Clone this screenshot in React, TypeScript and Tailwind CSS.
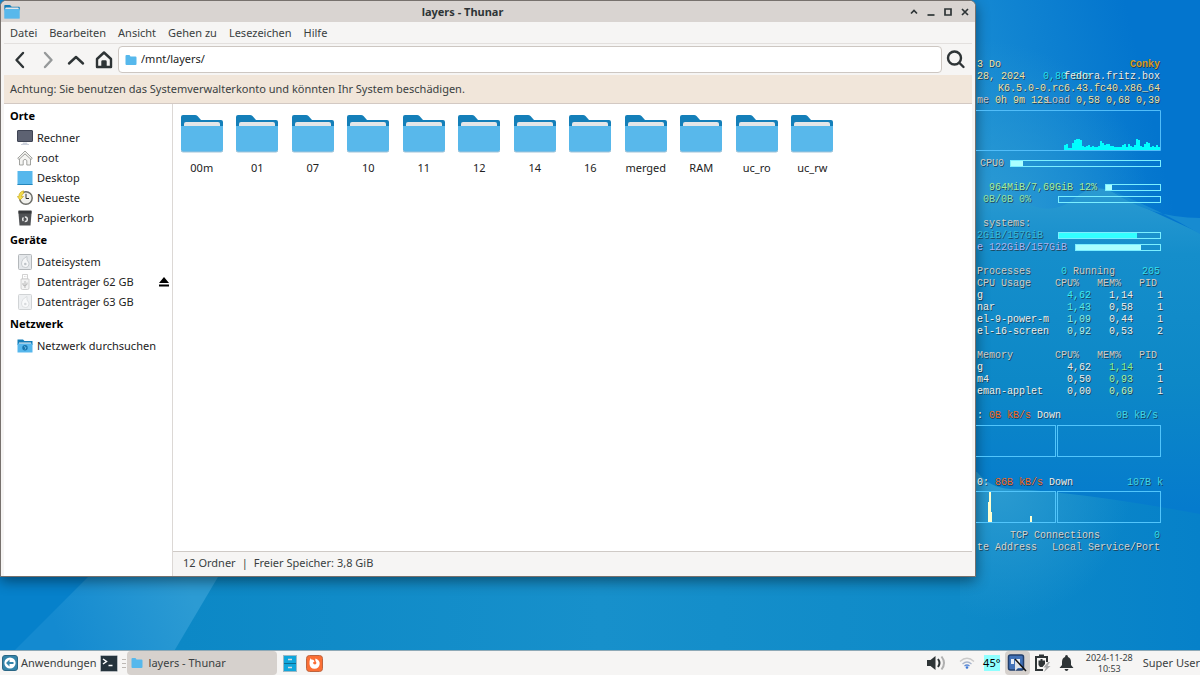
import type { ReactNode } from "react";

const folders = ["00m", "01", "07", "10", "11", "12", "14", "16", "merged", "RAM", "uc_ro", "uc_rw"];
const menus = ["Datei", "Bearbeiten", "Ansicht", "Gehen zu", "Lesezeichen", "Hilfe"];

const cpuLoad = [
  5, 6, 2, 2, 7, 10, 11, 11, 10, 4, 3, 4, 5, 3, 4, 3, 3, 4, 9, 7, 5, 6, 6, 4,
  4, 3, 3, 3, 3, 5, 6, 3, 6, 4, 3, 5, 11, 10, 4, 3, 6, 8, 7, 3, 4, 3, 5, 3,
];

function Wallpaper() {
  return (
    <svg className="absolute inset-0 -z-10 h-full w-full" viewBox="0 0 1200 675" preserveAspectRatio="none">
      <defs>
        <linearGradient id="sky" x1="960" x2="1130" y1="60" y2="20" gradientUnits="userSpaceOnUse">
          <stop offset="0" stopColor="#188cd3" />
          <stop offset="1" stopColor="#0375ce" />
        </linearGradient>
        <radialGradient id="haze" cx="980" cy="210" r="170" gradientUnits="userSpaceOnUse">
          <stop offset="0" stopColor="#2b9ad3" />
          <stop offset="1" stopColor="#2b9ad3" stopOpacity="0" />
        </radialGradient>
        <linearGradient id="sea" x1="0" x2="0" y1="190" y2="510" gradientUnits="userSpaceOnUse">
          <stop offset="0" stopColor="#2a9ad2" />
          <stop offset="0.2" stopColor="#158ecb" />
          <stop offset="0.6" stopColor="#0d88c7" />
          <stop offset="1" stopColor="#057bcd" />
        </linearGradient>
        <linearGradient id="floor" x1="0" x2="1200" y1="0" y2="0" gradientUnits="userSpaceOnUse">
          <stop offset="0.15" stopColor="#0c88c6" />
          <stop offset="0.5" stopColor="#1790cb" />
          <stop offset="0.8" stopColor="#0e8ac8" />
          <stop offset="1" stopColor="#0681c9" />
        </linearGradient>
        <radialGradient id="glow" cx="1000" cy="490" r="130" gradientUnits="userSpaceOnUse">
          <stop offset="0" stopColor="#2a9ad0" />
          <stop offset="1" stopColor="#2a9ad0" stopOpacity="0" />
        </radialGradient>
        <linearGradient id="beam" x1="60" x2="190" y1="640" y2="590" gradientUnits="userSpaceOnUse">
          <stop offset="0" stopColor="#148ad0" />
          <stop offset="1" stopColor="#2c9bd3" />
        </linearGradient>
      </defs>
      <rect width="1200" height="675" fill="url(#sky)" />
      <circle cx="980" cy="210" r="170" fill="url(#haze)" />
      <path d="M960 205Q1000 190 1030 205Q1055 215 1075 198Q1095 180 1118 195Q1160 215 1200 233V520H960Z" fill="url(#sea)" />
      <path d="M1110 190Q1150 218 1200 218V234Q1160 210 1110 190Z" fill="#178bd1" />
      <path d="M0 560H960V470L977 472Q990 488 1010 489Q1080 492 1200 514V675H0Z" fill="url(#floor)" />
      <path d="M960 470L977 472Q990 488 1010 489Q1080 492 1200 514V675H960Z" fill="url(#glow)" />
      <path d="M0 560H110L0 670Z" fill="#0681cb" />
      <path d="M105 560H228L160 675H-10Z" fill="url(#beam)" />
    </svg>
  );
}

function Folder({ className }: { className: string }) {
  return (
    <svg className={className} viewBox="0 0 42 38">
      <path d="M0 2Q0 0 2 0H14Q15.500 0 16.500 1L20 5H40Q42 5 42 7V14H0Z" fill="#147fb9" />
      <path d="M3 9Q3 7 5 7H37Q39 7 39 9V16H3Z" fill="#e4e6e8" />
      <path d="M0 11H42V35Q42 37 40 37H2Q0 37 0 35Z" fill="#58b8eb" />
      <path d="M0 35Q0 37 2 37H40Q42 37 42 35" fill="none" stroke="#a3c4d8" />
    </svg>
  );
}

function SmallFolder({ className }: { className: string }) {
  return (
    <svg className={className} viewBox="0 0 11 10">
      <path d="M0 1Q0 0 1 0H4L5 1.500H10Q11 1.500 11 2.500V9Q11 10 10 10H1Q0 10 0 9Z" fill="#56b8ec" />
    </svg>
  );
}

function Computer() {
  return (
    <svg className="size-4" viewBox="0 0 16 16">
      <rect x="0.500" y="0.500" width="15" height="11" rx="0.500" fill="#5d6272" stroke="#3f4454" />
      <path d="M6 12.500H10L10.500 14H12V15H4V14H5.500Z" fill="#ccd1dc" />
    </svg>
  );
}

function RootHome() {
  return (
    <svg className="size-4" viewBox="0 0 16 16" fill="#f4f4f2" stroke="#8b8d89" strokeWidth="0.8">
      <path d="M2.500 8V15H6.200V10.500Q8 8 9.800 10.500V15H13.500V8L8 3.500Z" />
      <path d="M0.700 8.300L8 1L15.300 8.300L14 9.500L8 3.800L2 9.500Z" />
    </svg>
  );
}

function DesktopTile() {
  return (
    <svg className="size-4" viewBox="0 0 16 16">
      <rect x="0.500" y="1" width="15" height="14" fill="#56b7ec" />
      <path d="M0.500 14.500H15.500" stroke="#2586bb" />
    </svg>
  );
}

function Clock() {
  return (
    <svg className="size-4" viewBox="0 0 16 16">
      <circle cx="8.900" cy="8" r="6.300" fill="#f1f1ed" stroke="#6d6e69" strokeWidth="1.500" />
      <path d="M9 3.800V8.500H12" fill="none" stroke="#333" />
      <path d="M0.300 6.500L3 10L6.500 6.500H4.500Q4.500 4.500 6.500 3.500V0.800Q2 2 1.800 6.500Z" fill="#f3dc49" stroke="#c5a214" strokeWidth="0.600" />
    </svg>
  );
}

function Trash() {
  return (
    <svg className="size-4" viewBox="0 0 16 16">
      <path d="M1.500 1H14.500V3.500L13.500 15.500H2.500L1.500 3.500Z" fill="#505255" />
      <path d="M1.500 0.500H14.500V3.500H1.500Z" fill="#36383b" />
      <circle cx="8" cy="9.300" r="2.300" fill="none" stroke="#e6e6e6" strokeWidth="1.500" strokeDasharray="3.500 1.300" />
    </svg>
  );
}

function Disk({ className }: { className?: string }) {
  return (
    <svg className={`size-4 ${className ?? ""}`} viewBox="0 0 16 16">
      <rect x="1.500" y="0.500" width="13" height="15" rx="1" fill="#e4e7ea" stroke="#b4b8bb" />
      <path d="M4.500 10Q4.500 5 10 2.500Q9 6 12 9Q12 13.500 8.500 13.500Q4.500 13.500 4.500 10Z" fill="#f5f6f7" stroke="#b6bbc0" strokeWidth="0.700" />
      <circle cx="8.300" cy="10" r="1.300" fill="#bec3c8" />
    </svg>
  );
}

function Usb() {
  return (
    <svg className="size-4" viewBox="0 0 16 16" stroke="#c6c6c6" strokeWidth="0.800">
      <path d="M5.500 0.500H10.500V5H5.500Z" fill="#fff" />
      <path d="M4 5H12V14Q12 15.500 10.500 15.500H5.500Q4 15.500 4 14Z" fill="#f3f3f3" />
      <path d="M8 7V14M6 9V11L8 12M10 8.500V10.500L8 11.500M7 2.500H7.500M8.700 2.500H9.200" fill="none" stroke="#aaa" />
    </svg>
  );
}

function NetworkFolder() {
  return (
    <svg className="size-4" viewBox="0 0 16 16">
      <path d="M0.500 1.500H6L7.500 3H15.500V7H0.500Z" fill="#147fb9" />
      <path d="M2 4.500H14V6H2Z" fill="#e4e6e8" />
      <path d="M0.500 5.500H15.500V14.500H0.500Z" fill="#56b7ec" />
      <circle cx="8" cy="9.700" r="2.700" fill="#1574ac" />
      <path d="M7 8.500L9 9.500L8 11.500" fill="none" stroke="#78c6ee" strokeWidth="0.800" />
    </svg>
  );
}

function Place({ icon, label, children }: { icon: ReactNode; label: string; children?: ReactNode }) {
  return (
    <li className="flex h-5 items-center pr-[3px] pl-[13px]">
      <a href="#" className="flex flex-1 items-center gap-1 whitespace-nowrap text-[#222]">
        {icon}
        {label}
      </a>
      {children}
    </li>
  );
}

function PlaceGroup({ title, children }: { title: string; children: ReactNode }) {
  return (
    <section>
      <h2 className="flex h-6 items-center pl-1.5 font-bold text-black">{title}</h2>
      <ul>{children}</ul>
    </section>
  );
}

function WindowButton({ label, d }: { label: string; d: string }) {
  return (
    <button aria-label={label} className="flex size-[17px] items-center justify-center">
      <svg className="size-2.5" viewBox="0 0 10 10" fill="none" stroke="#2e3436" strokeWidth="1.700">
        <path d={d} />
      </svg>
    </button>
  );
}

function ToolButton({ label, children }: { label: string; children: ReactNode }) {
  return (
    <button aria-label={label} className="flex h-7 w-7 shrink-0 items-center justify-center">
      <svg className="size-5" viewBox="0 0 20 20" fill="none" stroke="#2e3436" strokeWidth="2.400" strokeLinecap="round" strokeLinejoin="round">
        {children}
      </svg>
    </button>
  );
}

function FileManager() {
  return (
    <main className="mb-[73px] flex min-w-0 flex-1 flex-col rounded-t-md border border-[#77716d] bg-[#f6f5f4] text-[11px] text-[#3a3f41] shadow-[0_4px_14px_rgba(0,0,0,0.45)]">
      <header className="flex h-[21px] shrink-0 items-center rounded-t-md bg-[#d9d4d1] pr-0.5 pl-[3px]">
        <Folder className="h-[14px] w-4" />
        <h1 className="flex-1 pt-0.5 text-center font-bold text-[#2e3436]">layers - Thunar</h1>
        <WindowButton label="Einrollen" d="M2 6.500L5 3.500L8 6.500" />
        <WindowButton label="Minimieren" d="M1.500 8H8.500" />
        <WindowButton label="Maximieren" d="M2 2H8V8H2Z" />
        <WindowButton label="Schließen" d="M2 2L8 8M8 2L2 8" />
      </header>
      <div className="flex flex-1 flex-col px-[3px]">
        <nav className="flex h-[22px] items-center gap-3 border-b border-[#e3e0de] pt-0.5 pl-1.5">
          {menus.map((menu) => (
            <button key={menu}>{menu}</button>
          ))}
        </nav>
        <div className="flex h-[31px] items-center px-0.5">
          <ToolButton label="Zurück">
            <path d="M13 3L6.500 10L13 17" />
          </ToolButton>
          <ToolButton label="Vor">
            <path d="M7 3L13.500 10L7 17" stroke="#96999a" />
          </ToolButton>
          <ToolButton label="Übergeordneter Ordner">
            <path d="M3 13.500L10 7L17 13.500" />
          </ToolButton>
          <ToolButton label="Persönlicher Ordner">
            <path d="M3 9L10 2.500L17 9V17H3Z" />
            <path d="M8.500 16V11.500H11.500V16Z" fill="#2e3436" />
          </ToolButton>
          <label className="flex h-[27px] flex-1 items-center gap-1 rounded-[4px] border border-[#cdc7c2] bg-white pl-1.5">
            <SmallFolder className="h-[10px] w-3" />
            <input aria-label="Pfad" defaultValue="/mnt/layers/" className="min-w-0 flex-1 bg-transparent text-[#222] outline-none" />
          </label>
          <ToolButton label="Suchen">
            <circle cx="8.500" cy="8" r="6.500" />
            <path d="M13.500 13L17.500 17" />
          </ToolButton>
        </div>
        <p className="flex h-[29px] items-center border-b border-[#d3c9c3] bg-[#f1e6da] pl-1.5">
          Achtung: Sie benutzen das Systemverwalterkonto und könnten Ihr System beschädigen.
        </p>
        <div className="flex flex-1">
          <aside className="w-[169px] shrink-0 border-r border-[#dcd8d5] bg-white">
            <PlaceGroup title="Orte">
              <Place icon={<Computer />} label="Rechner" />
              <Place icon={<RootHome />} label="root" />
              <Place icon={<DesktopTile />} label="Desktop" />
              <Place icon={<Clock />} label="Neueste" />
              <Place icon={<Trash />} label="Papierkorb" />
            </PlaceGroup>
            <PlaceGroup title="Geräte">
              <Place icon={<Disk />} label="Dateisystem" />
              <Place icon={<Usb />} label="Datenträger 62 GB">
                <button aria-label="Auswerfen">
                  <svg className="size-2.5" viewBox="0 0 10 10">
                    <path d="M5 0L10 6H0ZM0 7.500H10V9.500H0Z" />
                  </svg>
                </button>
              </Place>
              <Place icon={<Disk className="opacity-60" />} label="Datenträger 63 GB" />
            </PlaceGroup>
            <PlaceGroup title="Netzwerk">
              <Place icon={<NetworkFolder />} label="Netzwerk durchsuchen" />
            </PlaceGroup>
          </aside>
          <div className="flex min-w-0 flex-1 flex-col">
            <div className="flex-1 bg-white pt-[11px] pl-px">
              <ul className="grid w-[666px] grid-cols-12">
                {folders.map((name) => (
                  <li key={name} className="flex flex-col items-center gap-[7px] text-[#222]">
                    <Folder className="h-[38px] w-[42px]" />
                    <span className="leading-4">{name}</span>
                  </li>
                ))}
              </ul>
            </div>
            <footer className="flex h-[25px] items-center gap-1.5 border-t border-[#cfcac6] pb-0.5 pl-2.5">
              <span>12 Ordner</span>
              <span>|</span>
              <span>Freier Speicher: 3,8 GiB</span>
            </footer>
          </div>
        </div>
      </div>
    </main>
  );
}

function Row({ children, right }: { children?: ReactNode; right?: ReactNode }) {
  return (
    <div className="grid h-3 pr-px pl-px whitespace-pre">
      <span className="col-start-1 row-start-1">{children}</span>
      <span className="col-start-1 row-start-1 justify-self-end">{right}</span>
    </div>
  );
}

type BarRowProps = { label: ReactNode; width: string; value: number; fill?: string };

function BarRow({ label, width, value, fill = "bg-[#aaffff]" }: BarRowProps) {
  return (
    <div className="flex h-3 items-start justify-between pl-px whitespace-pre">
      {label}
      <div className={`mt-0.5 h-[7px] shrink-0 border border-[#7beeff] ${width}`} role="meter" aria-valuenow={value}>
        <div className={`h-full ${fill}`} style={{ width: `${value}%` }} />
      </div>
    </div>
  );
}

type Process = { name: string; cpu: string; mem: string; pid: string; cpuColor?: string; memColor?: string };

const byCpu: Process[] = [
  { name: "g", cpu: "4,62", mem: "1,14", pid: "1", cpuColor: "text-[#3fe9ee]" },
  { name: "nar", cpu: "1,43", mem: "0,58", pid: "1", cpuColor: "text-[#5ce8e4]" },
  { name: "el-9-power-m", cpu: "1,09", mem: "0,44", pid: "1", cpuColor: "text-[#8ceee4]" },
  { name: "el-16-screen", cpu: "0,92", mem: "0,53", pid: "2", cpuColor: "text-[#b5efe9]" },
];

const byMemory: Process[] = [
  { name: "g", cpu: "4,62", mem: "1,14", pid: "1", memColor: "text-[#8df08a]" },
  { name: "m4", cpu: "0,50", mem: "0,93", pid: "1", memColor: "text-[#a6eea0]" },
  { name: "eman-applet", cpu: "0,00", mem: "0,69", pid: "1", memColor: "text-[#c2efb5]" },
];

function ProcessTable({ title, rows }: { title: string; rows: Process[] }) {
  return (
    <table className="ml-px w-[186px] table-fixed text-right whitespace-pre">
      <thead>
        <tr className="h-3 text-[#cfcac4]">
          <th className="w-[72px] p-0 text-left font-normal">{title}</th>
          <th className="w-[42px] p-0 pr-3 font-normal">CPU%</th>
          <th className="w-[42px] p-0 pr-3 font-normal">MEM%</th>
          <th className="w-[30px] p-0 pr-1.5 font-normal">PID</th>
        </tr>
      </thead>
      <tbody>
        {rows.map((row) => (
          <tr key={row.name} className="h-3">
            <td className="p-0 text-left">{row.name}</td>
            <td className={`p-0 ${row.cpuColor ?? ""}`}>{row.cpu}</td>
            <td className={`p-0 ${row.memColor ?? ""}`}>{row.mem}</td>
            <td className="p-0">{row.pid}</td>
          </tr>
        ))}
      </tbody>
    </table>
  );
}

function Conky() {
  return (
    <aside className="w-[224px] shrink-0 pt-[59px] pr-[39px] font-['Liberation_Mono',monospace] text-[10px] leading-3 text-[#eeece8] [text-shadow:1px_1px_0_rgba(30,40,50,0.7)]">
      <Row right={<span className="font-bold text-[#d99a1c]">Conky</span>}>
        <span className="text-[#f0dfa0]">3 Do</span>
      </Row>
      <Row right="fedora.fritz.box">
        <span className="text-[#f0dfa0]">{"28, 2024   "}</span>
        <span className="text-[#25dfee]">0,80 GHz</span>
      </Row>
      <div className="text-[#f0dfa0]">
        <Row right="K6.5.0-0.rc6.43.fc40.x86_64" />
        <Row
          right={
            <>
              <span className="text-[#c9c2c6]">Load</span> 0,58 0,68 0,39
            </>
          }
        >
          <span className="text-[#c9c2c6]">me</span> 0h 9m 12s
        </Row>
      </div>
      <svg className="mt-[3px] mb-[7px] h-[41px] w-full" viewBox="0 0 185 41" preserveAspectRatio="none">
        <path d="M0 0.500H184.500V40.500H0" fill="none" stroke="#52bdf8" />
        {cpuLoad.map((load, i) => (
          <rect key={i} x={88 + i * 2} y={40 - load} width="2" height={load} fill="#00ffff" />
        ))}
      </svg>
      <BarRow label={<span className="pl-[3px] text-[#cfcac4]">CPU0</span>} width="w-[151px]" value={8} />
      <div className="my-3">
        <BarRow label={<span className="text-[#a5eb9a]">{"  964MiB/7,69GiB 12%"}</span>} width="w-[56px]" value={11} />
        <BarRow label={<span className="text-[#93e0a4]">{" 0B/0B 0%"}</span>} width="w-[103px]" value={0} />
      </div>
      <Row>
        <span className="text-[#cfcac4]">{" systems:"}</span>
      </Row>
      <BarRow label={<span className="text-[#37b7d8]">2GiB/157GiB</span>} width="w-[103px]" fill="bg-[#33ffff]" value={77} />
      <BarRow label={<span className="text-[#a9b2f0]">e 122GiB/157GiB</span>} width="w-[86px]" value={77} />
      <div className="mt-3 text-[#cfcac4]">
        <Row right={<span className="text-[#35dcea]">205</span>}>
          {"Processes     "}
          <span className="text-[#35dcea]">0</span> Running
        </Row>
      </div>
      <ProcessTable title="CPU Usage" rows={byCpu} />
      <div className="my-3">
        <ProcessTable title="Memory" rows={byMemory} />
      </div>
      <Row right={<span className="pr-0.5 text-[#43d5e3]">0B kB/s</span>}>
        {": "}
        <span className="text-[#f0661c]">0B kB/s</span> Down
      </Row>
      <div className="mt-[3px] flex h-8 gap-px">
        <div className="flex-1 border border-l-0 border-[#52c5fb]" />
        <div className="w-[104px] border border-[#52c5fb]" />
      </div>
      <div className="mt-5">
        <Row>
          {"0: "}
          <span className="text-[#f0661c]">86B kB/s</span> Down{"         "}
          <span className="text-[#43d5e3]">107B k</span>
        </Row>
      </div>
      <div className="mt-0.5 mb-[7px] flex h-8 gap-px">
        <div className="flex-1 border border-l-0 border-[#52c5fb]">
          <svg className="h-full w-full" viewBox="0 0 79 30" preserveAspectRatio="none" fill="#ffffd0">
            <path d="M12 30V10H13V0H15V20H16V30ZM54 30V24H56V30Z" />
          </svg>
        </div>
        <div className="w-[104px] border border-[#52c5fb]" />
      </div>
      <div className="text-[#d6d2ce]">
        <Row right={<span className="text-[#35dcea]">0</span>}>
          <span className="pl-[33px]">TCP Connections</span>
        </Row>
        <Row right="Local Service/Port">te Address</Row>
      </div>
    </aside>
  );
}

function Taskbar() {
  return (
    <footer className="flex h-[25px] shrink-0 items-center border-t border-[#8fa9b6] bg-[#f6f5f4] text-[11px] whitespace-nowrap text-[#3a3f41]">
      <button className="flex items-center gap-[3px] pl-0.5">
        <svg className="size-4" viewBox="0 0 16 16">
          <rect x="0.500" y="0.500" width="15" height="15" rx="2.500" fill="#3484aa" stroke="#2a6685" />
          <circle cx="8" cy="8" r="5.600" fill="#fff" />
          <path d="M4 8L7.500 4.500V7H11.500V9H7.500V11.500Z" fill="#3484aa" />
        </svg>
        Anwendungen
      </button>
      <button aria-label="Terminal" className="ml-[3px]">
        <svg className="h-[17px] w-[18px]" viewBox="0 0 18 17">
          <rect x="0.500" y="0.500" width="17" height="16" rx="1" fill="#25333c" stroke="#b6bbbf" />
          <path d="M3 4L6.500 6.500L3 9M8.500 10.500H12.500" fill="none" stroke="#fff" strokeWidth="1.500" />
        </svg>
      </button>
      <svg className="mr-px ml-1 h-[9px] w-1 shrink-0" viewBox="0 0 4 9" stroke="#bcb8b4">
        <path d="M0 0.500H4M0 4.500H4M0 8.500H4" />
      </svg>
      <button className="flex h-6 w-[150px] items-center gap-1.5 rounded bg-[#d6d1cd] pl-1">
        <SmallFolder className="h-[10px] w-3" />
        layers - Thunar
      </button>
      <button aria-label="Dateiverwaltung" className="ml-1.5">
        <svg className="h-[17px] w-[14px]" viewBox="0 0 14 17">
          <rect x="0.500" y="0.500" width="13" height="16" fill="#0fa6dc" stroke="#9db9c5" />
          <path d="M1 8.500H13" stroke="#0a6c92" />
          <path d="M5 4.500H9M5 12.500H9" stroke="#d8dde0" strokeWidth="1.500" />
        </svg>
      </button>
      <button aria-label="Browser" className="ml-[9px]">
        <svg className="size-[17px]" viewBox="0 0 17 17">
          <rect x="0.500" y="0.500" width="16" height="16" rx="3" fill="#fb6f35" stroke="#bd6540" />
          <path d="M4.500 3Q5 5 6 4.500Q8 4.500 8.500 6.500L7 7.500Q7 9.500 9 9.500Q11.500 8.500 9.500 6Q9 4.500 9.500 3.500Q14 5 13.700 9Q13 13.500 8.500 13.800Q4 13.500 3.500 9Q3.200 6 4.500 3Z" fill="#fff" />
        </svg>
      </button>
      <div className="flex-1" />
      <button aria-label="Lautstärke">
        <svg className="h-4 w-[19px]" viewBox="0 0 19 16" fill="none" strokeWidth="2">
          <path d="M0 5H3.500L8.500 1V15L3.500 11H0Z" fill="#2e3436" />
          <path d="M11 4Q14 8 11 12" stroke="#2e3436" />
          <path d="M14.500 1.500Q19.500 8 14.500 14.500" stroke="#b0b0b0" />
        </svg>
      </button>
      <button aria-label="Netzwerk" className="ml-[13px]">
        <svg className="size-4" viewBox="0 0 16 16" fill="none" strokeWidth="1.300">
          <path d="M1 6.500Q8 0 15 6.500" stroke="#cacaca" />
          <path d="M3.500 9Q8 5 12.500 9" stroke="#a9b6cc" />
          <path d="M5.500 11Q8 9 10.500 11" stroke="#5d8bd6" />
          <circle cx="8" cy="12.500" r="1.300" fill="#3c78d8" />
        </svg>
      </button>
      <span className="ml-[9px] flex size-4 items-center justify-center bg-[#8fffff] text-black">45°</span>
      <button aria-label="Eingabe" className="ml-[5px] flex h-6 w-[25px] items-center justify-center rounded bg-[#d6d1cd]">
        <svg className="h-[18px] w-5" viewBox="0 0 20 18">
          <rect x="1.500" y="1" width="15" height="15" rx="2" fill="#4272b8" stroke="#233f6b" strokeWidth="1.500" />
          <path d="M4 5H7V10H4ZM8 5H13V11H8Z" fill="#e7edf5" />
          <path d="M8 6V17L11 14H16Z" fill="#dfe3e8" />
          <path d="M8 5L19 17" stroke="#111" strokeWidth="1.500" />
        </svg>
      </button>
      <button aria-label="Energie" className="ml-1">
        <svg className="h-[18px] w-[17px]" viewBox="0 0 17 18">
          <path d="M5 2V0.500H10V2H14V8H12V4H3V15H9V17H1V2Z" fill="#2e3436" />
          <path d="M6.500 5H8.500V6.500H11V10L8.500 13H6L4.500 11V6.500H6.500Z" fill="#2e3436" />
          <path d="M14 8L9.500 13.500H12L10 18L16.500 12H13.500L16 8Z" fill="#a7a9aa" />
        </svg>
      </button>
      <button aria-label="Benachrichtigungen" className="ml-2">
        <svg className="h-4 w-[15px]" viewBox="0 0 15 16" fill="#2e3436">
          <path d="M7.500 0Q9 0 9 2Q12 3 12 7V10L14.500 13H0.500L3 10V7Q3 3 6 2Q6 0 7.500 0ZM5.500 14H9.500Q9 16 7.500 16Q6 16 5.500 14Z" />
        </svg>
      </button>
      <time className="ml-3 text-center text-[9px] leading-[11px]">
        2024-11-28
        <br />
        10:53
      </time>
      <span className="ml-2.5">Super User</span>
    </footer>
  );
}

export default function App() {
  return (
    <div className="relative isolate flex min-h-screen flex-col overflow-hidden font-['Noto_Sans',sans-serif]">
      <Wallpaper />
      <div className="flex flex-1">
        <FileManager />
        <Conky />
      </div>
      <Taskbar />
    </div>
  );
}
